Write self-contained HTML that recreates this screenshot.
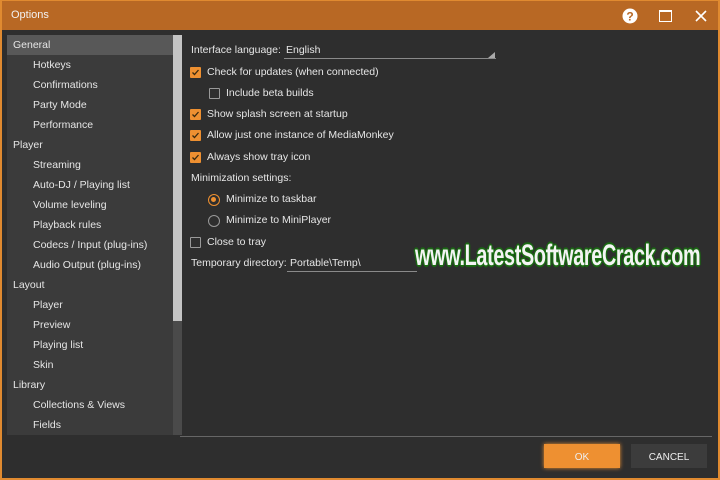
<!DOCTYPE html>
<html><head><meta charset="utf-8"><style>
*{margin:0;padding:0;box-sizing:border-box}
body{width:720px;height:480px;background:#e08a30;font-family:"Liberation Sans",sans-serif;overflow:hidden;position:relative}
.win{position:absolute;left:2px;top:1px;width:716px;height:477px;background:#2e2e2e}
.title{position:absolute;left:0;top:0;width:716px;height:29px;background:#b86824;color:#f2f2f2;font-size:11px;line-height:29px;padding-left:9px}
.left{position:absolute;left:5px;top:34px;width:166px;height:400px;background:#3b3b3b}
.sb{position:absolute;left:171px;top:34px;width:9px;height:400px;background:#4a4a4a}
.thumb{position:absolute;left:171px;top:34px;width:9px;height:286px;background:#c4c4c4}
.it{position:absolute;left:0;width:166px;height:20px;line-height:20px;font-size:10.5px;color:#e6e6e6;padding-left:6px}
.it.s{padding-left:26px}
.sel{background:#585858}
.t{position:absolute;font-size:10.5px;color:#e6e6e6;line-height:12px;white-space:nowrap}
.cb{position:absolute;width:11px;height:11px;background:#ee9031;border-radius:1px}
.cb svg{position:absolute;left:1px;top:1px}
.ucb{position:absolute;width:11px;height:11px;border:1.5px solid #999;border-radius:1px}
.rd{position:absolute;width:12px;height:12px;border:1.5px solid #999;border-radius:50%}
.rd.on{border-color:#ee9031}
.rd.on:after{content:"";position:absolute;left:2px;top:2px;width:5px;height:5px;border-radius:50%;background:#ee9031}
.line{position:absolute;height:1px;background:#8a8a8a}
.wm{position:absolute;left:413px;top:238px;font-size:30px;font-weight:bold;font-family:"Liberation Sans",sans-serif;color:#f4f4f4;letter-spacing:-0.5px;transform:scaleX(0.66);transform-origin:left;text-shadow:0 0 2px #1b6e13,1px 1px 0 #1b6e13,-1px -1px 0 #1b6e13,1px -1px 0 #1b6e13,-1px 1px 0 #1b6e13,2px 0 1px #1b6e13,-2px 0 1px #1b6e13,0 2px 1px #1b6e13,0 -2px 1px #1b6e13;white-space:nowrap}
.btn{position:absolute;top:443px;width:76px;height:24px;font-size:10px;color:#eee;text-align:center;line-height:27px}
</style></head><body>
<div class="win">
<div class="title">Options</div>
<svg style="position:absolute;left:620px;top:7px" width="16" height="16" viewBox="0 0 16 16"><circle cx="8" cy="8" r="7.5" fill="#fff"/><text x="8" y="12.5" font-size="12" font-weight="bold" text-anchor="middle" fill="#b86824" font-family="Liberation Sans">?</text></svg>
<div style="position:absolute;left:657px;top:9px;width:13px;height:12px;border:1.5px solid #fff;border-top-width:2.5px"></div>
<svg style="position:absolute;left:693px;top:9px" width="12" height="12"><path d="M1 1L11 11M11 1L1 11" stroke="#fff" stroke-width="1.6"/></svg>

<div class="left">
<div class="it sel" style="top:0">General</div>
<div class="it s" style="top:20px">Hotkeys</div>
<div class="it s" style="top:40px">Confirmations</div>
<div class="it s" style="top:60px">Party Mode</div>
<div class="it s" style="top:80px">Performance</div>
<div class="it" style="top:100px">Player</div>
<div class="it s" style="top:120px">Streaming</div>
<div class="it s" style="top:140px">Auto-DJ / Playing list</div>
<div class="it s" style="top:160px">Volume leveling</div>
<div class="it s" style="top:180px">Playback rules</div>
<div class="it s" style="top:200px">Codecs / Input (plug-ins)</div>
<div class="it s" style="top:220px">Audio Output (plug-ins)</div>
<div class="it" style="top:240px">Layout</div>
<div class="it s" style="top:260px">Player</div>
<div class="it s" style="top:280px">Preview</div>
<div class="it s" style="top:300px">Playing list</div>
<div class="it s" style="top:320px">Skin</div>
<div class="it" style="top:340px">Library</div>
<div class="it s" style="top:360px">Collections &amp; Views</div>
<div class="it s" style="top:380px">Fields</div>
</div>
<div class="sb"></div><div class="thumb"></div>

<div class="t" style="left:189px;top:43px">Interface language:</div>
<div class="t" style="left:284px;top:43px">English</div>
<div class="line" style="left:282px;top:57px;width:212px"></div>
<svg style="position:absolute;left:486px;top:51px" width="7" height="6"><path d="M7 0V6H0Z" fill="#aaa"/></svg>

<div class="cb" style="left:188px;top:66px"><svg width="9" height="9"><path d="M1.5 4.5L3.5 6.5L7.5 2" stroke="#3a2a10" stroke-width="1.3" fill="none"/></svg></div>
<div class="t" style="left:205px;top:65px">Check for updates (when connected)</div>
<div class="ucb" style="left:207px;top:87px"></div>
<div class="t" style="left:224px;top:86px">Include beta builds</div>
<div class="cb" style="left:188px;top:108px"><svg width="9" height="9"><path d="M1.5 4.5L3.5 6.5L7.5 2" stroke="#3a2a10" stroke-width="1.3" fill="none"/></svg></div>
<div class="t" style="left:205px;top:107px">Show splash screen at startup</div>
<div class="cb" style="left:188px;top:129px"><svg width="9" height="9"><path d="M1.5 4.5L3.5 6.5L7.5 2" stroke="#3a2a10" stroke-width="1.3" fill="none"/></svg></div>
<div class="t" style="left:205px;top:128px">Allow just one instance of MediaMonkey</div>
<div class="cb" style="left:188px;top:151px"><svg width="9" height="9"><path d="M1.5 4.5L3.5 6.5L7.5 2" stroke="#3a2a10" stroke-width="1.3" fill="none"/></svg></div>
<div class="t" style="left:205px;top:150px">Always show tray icon</div>
<div class="t" style="left:189px;top:171px">Minimization settings:</div>
<div class="rd on" style="left:206px;top:193px"></div>
<div class="t" style="left:224px;top:192px">Minimize to taskbar</div>
<div class="rd" style="left:206px;top:214px"></div>
<div class="t" style="left:224px;top:213px">Minimize to MiniPlayer</div>
<div class="ucb" style="left:188px;top:236px"></div>
<div class="t" style="left:205px;top:235px">Close to tray</div>
<div class="t" style="left:189px;top:256px">Temporary directory:</div>
<div class="t" style="left:288px;top:256px">Portable\Temp\</div>
<div class="line" style="left:285px;top:270px;width:130px"></div>
<div class="wm">www.LatestSoftwareCrack.com</div>

<div class="line" style="left:178px;top:435px;width:532px;background:#666"></div>
<div class="btn" style="left:542px;background:#ee9031;box-shadow:0 0 4px #ee9031">OK</div>
<div class="btn" style="left:629px;background:#3c3c3c">CANCEL</div>
</div>
</body></html>
